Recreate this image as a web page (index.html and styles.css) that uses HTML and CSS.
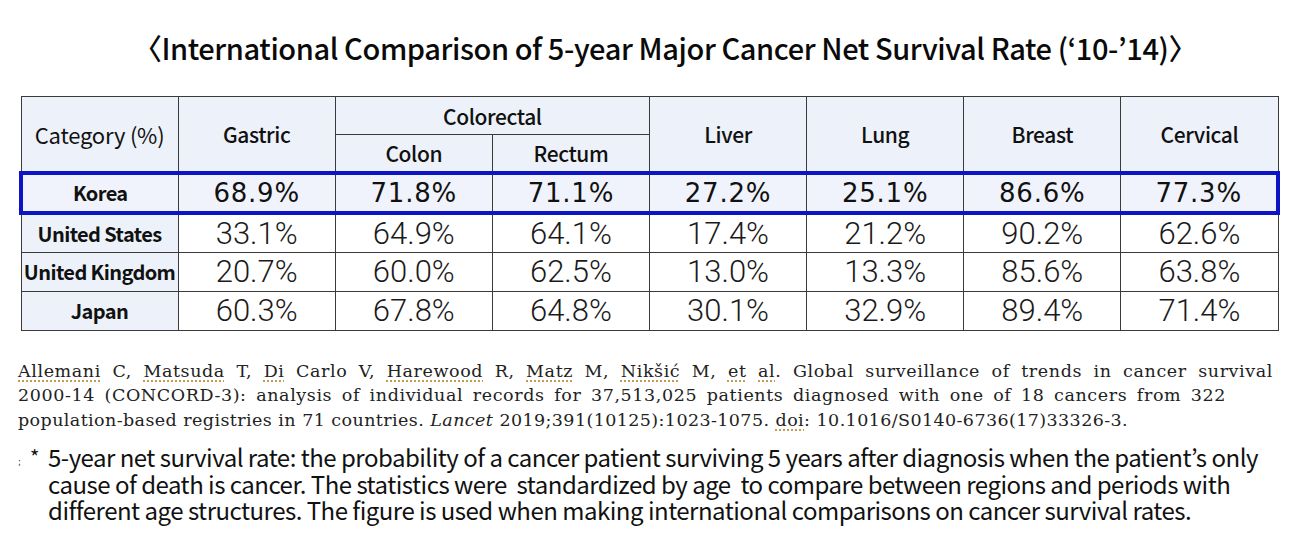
FILE: index.html
```html
<!DOCTYPE html>
<html lang="en">
<head>
<meta charset="utf-8">
<title>International Comparison of 5-year Major Cancer Net Survival Rate</title>
<link rel="stylesheet" href="styles.css">
</head>
<body>
<div class="page">
  <h1 class="title">〈International Comparison of 5-year Major Cancer Net Survival Rate (‘10-’14)〉</h1>

  <table class="rates">
    <colgroup>
      <col><col><col><col><col><col><col><col>
    </colgroup>
    <thead>
      <tr class="h1">
        <th rowspan="2" class="cat">Category (%)</th>
        <th rowspan="2">Gastric</th>
        <th colspan="2">Colorectal</th>
        <th rowspan="2">Liver</th>
        <th rowspan="2">Lung</th>
        <th rowspan="2">Breast</th>
        <th rowspan="2">Cervical</th>
      </tr>
      <tr class="h2">
        <th>Colon</th>
        <th>Rectum</th>
      </tr>
    </thead>
    <tbody>
      <tr class="korea">
        <th>Korea</th>
        <td>68.9%</td><td>71.8%</td><td>71.1%</td><td>27.2%</td><td>25.1%</td><td>86.6%</td><td>77.3%</td>
      </tr>
      <tr class="r">
        <th>United States</th>
        <td>33.1%</td><td>64.9%</td><td>64.1%</td><td>17.4%</td><td>21.2%</td><td>90.2%</td><td>62.6%</td>
      </tr>
      <tr class="r">
        <th>United Kingdom</th>
        <td>20.7%</td><td>60.0%</td><td>62.5%</td><td>13.0%</td><td>13.3%</td><td>85.6%</td><td>63.8%</td>
      </tr>
      <tr class="r">
        <th>Japan</th>
        <td>60.3%</td><td>67.8%</td><td>64.8%</td><td>30.1%</td><td>32.9%</td><td>89.4%</td><td>71.4%</td>
      </tr>
    </tbody>
  </table>

  <div class="cite">
    <div class="ln ln1"><span class="sp">Allemani</span> C, <span class="sp">Matsuda</span> T, <span class="sp">Di</span> Carlo V, <span class="sp">Harewood</span> R, <span class="sp">Matz</span> M, <span class="sp">Nikšić</span> M, <span class="sp">et</span> <span class="sp">al</span>. Global surveillance of trends in cancer survival</div>
    <div class="ln ln2">2000-14 (CONCORD-3): analysis of individual records for 37,513,025 patients diagnosed with one of 18 cancers from 322</div>
    <div class="ln ln3">population-based registries in 71 countries. <i>Lancet</i> 2019;391(10125):1023-1075. <span class="sp">doi</span>: 10.1016/S0140-6736(17)33326-3.</div>
  </div>

  <div class="note">
    <span class="mark">;</span>
    <span class="star">*</span>
    <p class="note-text">5-year net survival rate: the probability of a cancer patient surviving 5 years after diagnosis when the patient’s only cause of death is cancer. The statistics were&nbsp; standardized by age&nbsp; to compare between regions and periods with different age structures. The figure is used when making international comparisons on cancer survival rates.</p>
  </div>
</div>
</body>
</html>
```

FILE: styles.css
```css
html, body {
  margin: 0;
  padding: 0;
  background: #ffffff;
}

.page {
  width: 1304px;
  height: 556px;
  overflow: hidden;
  display: flex;
  flex-direction: column;
}

.title {
  margin: 0;
  height: 96px;
  box-sizing: border-box;
  padding-top: 28px;
  padding-left: 26px;
  text-align: center;
  font-family: "Noto Sans CJK KR", "Noto Sans", sans-serif;
  font-weight: 500;
  font-size: 29px;
  line-height: 38px;
  color: #0a0a0a;
  letter-spacing: -0.4px;
}

.rates {
  margin-left: 19px;
  width: 1261px;
  border-collapse: collapse;
  table-layout: fixed;
  border: 1.5px solid #333;
}

.rates th,
.rates td {
  border: 1px solid #3a3a3a;
  padding: 0;
  text-align: center;
  vertical-align: middle;
}

.rates thead th {
  background: #edf1fa;
  font-family: "Noto Sans CJK KR", "Noto Sans", sans-serif;
  font-weight: 500;
  font-size: 21px;
  color: #111;
  letter-spacing: -0.4px;
}

.rates thead th.cat {
  font-weight: 400;
  font-size: 22px;
  letter-spacing: -0.2px;
}

.rates .h1 { height: 38px; }
.rates .h2 { height: 38px; }

.rates tbody th {
  background: #edf1fa;
  font-family: "Noto Sans CJK KR", "Noto Sans", sans-serif;
  font-weight: 700;
  font-size: 20px;
  letter-spacing: -0.6px;
  color: #111;
  white-space: nowrap;
}

.rates tbody td {
  font-family: Roboto, "Liberation Sans", sans-serif;
  font-size: 31px;
  font-weight: 300;
  letter-spacing: 0;
  color: #1a1a1a;
}

.rates tr.korea { height: 40px; }
.rates tr.r { height: 39px; }

.rates tr.korea th,
.rates tr.korea td {
  background: #f0f3fb;
  border-top: 4px solid #0d14c4;
  border-bottom: 4px solid #0d14c4;
}

.rates tr.korea td {
  font-family: "DejaVu Sans", "Liberation Sans", sans-serif;
  font-size: 26px;
  font-weight: 400;
  letter-spacing: 0.8px;
  color: #111;
}

.rates tr.korea th:first-child { border-left: 4px solid #0d14c4; }
.rates tr.korea td:last-child { border-right: 4px solid #0d14c4; }

.rates tr.r td { background: #ffffff; }

.cite {
  margin-top: 28px;
  margin-left: 18px;
  font-family: "DejaVu Serif", "Liberation Serif", serif;
  font-size: 17.5px;
  line-height: 24.5px;
  letter-spacing: 0.6px;
  color: #222;
}

.ln {
  white-space: nowrap;
  text-align: justify;
  text-align-last: justify;
}

.ln1 { width: 1255px; }
.ln2 { width: 1208px; }
.ln3 { width: 1110px; letter-spacing: 0.4px; }

.sp {
  text-decoration: underline dotted #c79a52;
  text-underline-offset: 4px;
  text-decoration-thickness: 1.5px;
}

.note {
  margin-top: 12px;
  display: flex;
  align-items: flex-start;
}

.mark {
  width: 22px;
  padding-left: 18px;
  box-sizing: border-box;
  font-family: "DejaVu Sans", sans-serif;
  font-size: 9px;
  line-height: 9px;
  margin-top: 14px;
  color: #333;
}

.star {
  width: 26px;
  box-sizing: border-box;
  padding-left: 8px;
  font-family: "Noto Sans CJK KR", sans-serif;
  font-size: 20px;
  line-height: 26px;
  color: #111;
}

.note-text {
  margin: 0;
  width: 1230px;
  font-family: "Noto Sans CJK KR", "Noto Sans", sans-serif;
  font-size: 24px;
  line-height: 26.5px;
  color: #111;
  letter-spacing: -0.5px;
}
```
